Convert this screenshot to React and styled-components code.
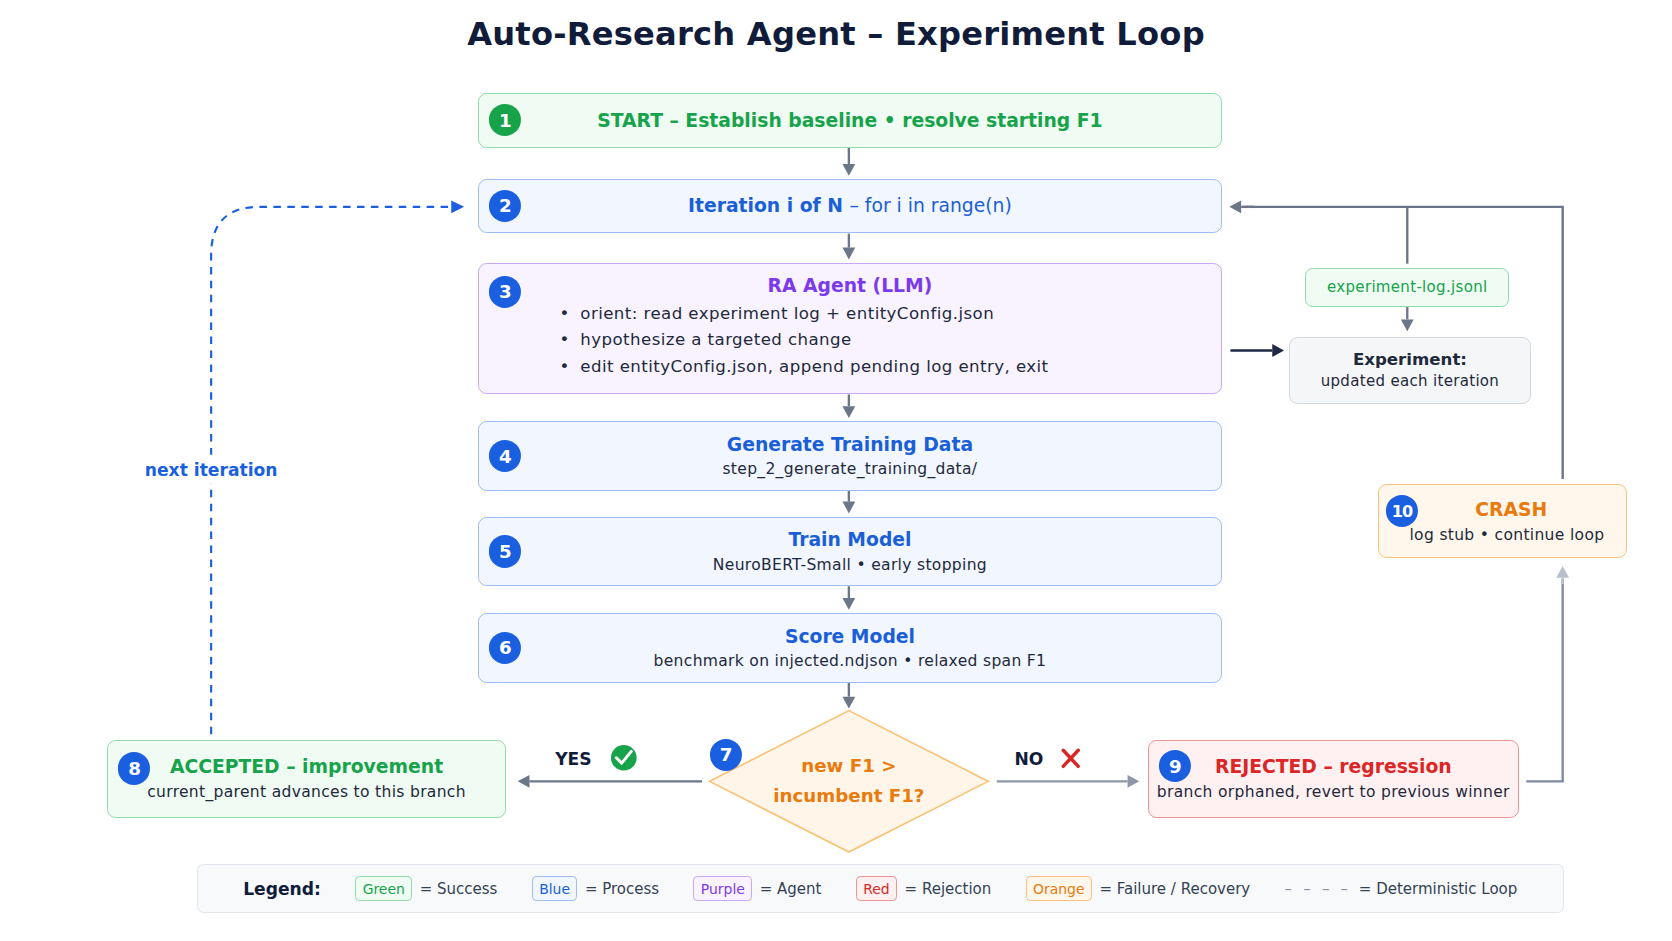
import styled, { createGlobalStyle } from 'styled-components';

const Global = createGlobalStyle`
  html, body { margin: 0; padding: 0; background: #ffffff; }
  body { font-family: "DejaVu Sans", "Liberation Sans", sans-serif; color: #1e293b; }
`;

const tones = {
  green: { bg: '#effbf3', border: '#8fdcaa', text: '#16a34a' },
  blue: { bg: '#f1f6ff', border: '#9dbef2', text: '#1a5fd8' },
  purple: { bg: '#f8f3ff', border: '#cba8f2', text: '#7c3aed' },
  red: { bg: '#fff1f1', border: '#f09393', text: '#dc2626' },
  orange: { bg: '#fff7ec', border: '#fcc07e', text: '#ea7a0c' },
  gray: { bg: '#f5f6f8', border: '#d3d7de', text: '#1e293b' },
};

const Stage = styled.div`
  width: 1560px;
  height: 878px;
  position: relative;
  zoom: 1.0718;
  overflow: hidden;
`;

const Title = styled.h1`
  margin: 0;
  padding-top: 14px;
  text-align: center;
  font-size: 30px;
  font-weight: bold;
  color: #111c3a;
  letter-spacing: 0.2px;
`;

const Node = styled.div`
  position: absolute;
  box-sizing: border-box;
  background: ${p => tones[p.tone].bg};
  border: 1.5px solid ${p => tones[p.tone].border};
  border-radius: 8px;
  display: flex;
  flex-direction: column;
  align-items: center;
  justify-content: center;
  gap: 5px;
  text-align: center;
`;

const NodeTitle = styled.div`
  font-size: 17.5px;
  font-weight: bold;
  color: ${p => tones[p.tone].text};
  span { font-weight: normal; }
`;

const Sub = styled.div`
  font-size: 14.5px;
  color: #1e293b;
  letter-spacing: 0.3px;
`;

const Bullets = styled.ul`
  margin: 0;
  padding: 0 0 0 75px;
  align-self: stretch;
  text-align: left;
  list-style: none;
  li { font-size: 15.5px; line-height: 25px; letter-spacing: 0.4px; }
  li::before { content: "•"; margin-right: 10px; }
`;

const Badge = styled.div`
  position: absolute;
  width: 30px;
  height: 30px;
  border-radius: 50%;
  background: ${p => (p.green ? '#16a34a' : '#1a5fe0')};
  color: #fff;
  font-weight: bold;
  font-size: ${p => (p.small ? '15px' : '17px')};
  display: flex;
  align-items: center;
  justify-content: center;
  transform: translate(-50%, -50%);
  letter-spacing: -1px;
`;

const Label = styled.div`
  position: absolute;
  transform: translate(-50%, -50%);
  font-size: ${p => p.size || 16}px;
  font-weight: bold;
  color: ${p => p.color || '#111c3a'};
  white-space: nowrap;
  background: ${p => p.bg || 'transparent'};
  padding: 4px 0;
`;

const DiamondText = styled.div`
  position: absolute;
  left: 662px;
  top: 663px;
  width: 260px;
  height: 132px;
  display: flex;
  flex-direction: column;
  align-items: center;
  justify-content: center;
  font-size: 17px;
  font-weight: bold;
  color: #ea7a0c;
  line-height: 28px;
`;

const Legend = styled.div`
  position: absolute;
  left: 184px;
  top: 806px;
  width: 1275px;
  height: 46px;
  box-sizing: border-box;
  background: #f8f9fb;
  border: 1.5px solid #e2e5eb;
  border-radius: 6px;
  display: flex;
  align-items: center;
  padding-left: 42px;
  gap: 32px;
  font-size: 14px;
  color: #334155;
`;

const LegendHead = styled.b`
  font-size: 16px;
  color: #111c3a;
  margin-right: 0;
`;

const LegendItem = styled.div`
  display: flex;
  align-items: center;
  gap: 7px;
`;

const Chip = styled.span`
  font-size: 13px;
  color: ${p => tones[p.tone].text};
  background: ${p => tones[p.tone].bg};
  border: 1.5px solid ${p => tones[p.tone].border};
  border-radius: 4px;
  padding: 3px 6px;
`;

const Overlay = styled.svg`
  position: absolute;
  left: 0;
  top: 0;
`;

const main = [
  { n: 2, top: 167, h: 50, title: <>Iteration i of N <span>– for i in range(n)</span></> },
  { n: 4, top: 393, h: 65, title: 'Generate Training Data', sub: 'step_2_generate_training_data/' },
  { n: 5, top: 482, h: 65, title: 'Train Model', sub: 'NeuroBERT-Small • early stopping' },
  { n: 6, top: 572, h: 65, title: 'Score Model', sub: 'benchmark on injected.ndjson • relaxed span F1' },
];

const G = '#6b7689';

function Arrow({ x1, y1, x2, y2, color = G, w = 2.2 }) {
  const a = Math.atan2(y2 - y1, x2 - x1);
  const L = 11, W = 6;
  const bx = x2 - L * Math.cos(a), by = y2 - L * Math.sin(a);
  const px = -Math.sin(a) * W, py = Math.cos(a) * W;
  return (
    <g>
      <line x1={x1} y1={y1} x2={bx} y2={by} stroke={color} strokeWidth={w} />
      <polygon points={`${x2},${y2} ${bx + px},${by + py} ${bx - px},${by - py}`} fill={color} />
    </g>
  );
}

export default function App() {
  return (
    <>
      <Global />
      <Stage>
        <Title>Auto-Research Agent – Experiment Loop</Title>

        <Overlay width="1560" height="878">
          <Arrow x1={792} y1={138} x2={792} y2={164} />
          <Arrow x1={792} y1={218} x2={792} y2={242} />
          <Arrow x1={792} y1={368} x2={792} y2={390} />
          <Arrow x1={792} y1={458} x2={792} y2={479} />
          <Arrow x1={792} y1={547} x2={792} y2={569} />
          <Arrow x1={792} y1={637} x2={792} y2={661} />
          <Arrow x1={655} y1={729} x2={483} y2={729} />
          <Arrow x1={930} y1={729} x2={1063} y2={729} color="#8d97a8" />
          <polyline points="1424,729 1458,729 1458,540" fill="none" stroke="#7f8aa0" strokeWidth="2.2" />
          <Arrow x1={1458} y1={545} x2={1458} y2={528} color="#b8c0cc" />
          <polyline points="1458,447 1458,193 1160,193" fill="none" stroke={G} strokeWidth="2.2" />
          <Arrow x1={1170} y1={193} x2={1147} y2={193} />
          <line x1={1313} y1={193} x2={1313} y2={246} stroke={G} strokeWidth="2.2" />
          <Arrow x1={1313} y1={286} x2={1313} y2={309} />
          <Arrow x1={1148} y1={327} x2={1198} y2={327} color="#1e2a45" />
          <path d="M197 685 L197 238 Q197 193 242 193 L422 193" fill="none" stroke="#1a5fe0" strokeWidth="2" strokeDasharray="7 6" />
          <polygon points="433,193 421,187 421,199" fill="#1a5fe0" />
          <polygon points="792,663 922,729 792,795 662,729" fill="#fff6e9" stroke="#fcc072" strokeWidth="1.5" />
          <circle cx="582" cy="707" r="12" fill="#16a34a" />
          <path d="M575 707 l5 5 l9 -11" fill="none" stroke="#fff" strokeWidth="2.8" strokeLinecap="round" strokeLinejoin="round" />
          <path d="M992 700 l14 15 M1006 700 l-14 15" stroke="#dc2626" strokeWidth="3.2" strokeLinecap="round" />
        </Overlay>

        <Node tone="green" style={{ left: 446, top: 87, width: 694, height: 51 }}>
          <NodeTitle tone="green">START – Establish baseline • resolve starting F1</NodeTitle>
        </Node>
        <Badge green style={{ left: 471, top: 112 }}>1</Badge>

        {main.map(m => (
          <div key={m.n}>
            <Node tone="blue" style={{ left: 446, top: m.top, width: 694, height: m.h }}>
              <NodeTitle tone="blue">{m.title}</NodeTitle>
              {m.sub && <Sub>{m.sub}</Sub>}
            </Node>
            <Badge style={{ left: 471, top: m.top + m.h / 2 }}>{m.n}</Badge>
          </div>
        ))}

        <Node tone="purple" style={{ left: 446, top: 245, width: 694, height: 123, justifyContent: 'flex-start', paddingTop: 11, gap: 4 }}>
          <NodeTitle tone="purple">RA Agent (LLM)</NodeTitle>
          <Bullets>
            <li>orient: read experiment log + entityConfig.json</li>
            <li>hypothesize a targeted change</li>
            <li>edit entityConfig.json, append pending log entry, exit</li>
          </Bullets>
        </Node>
        <Badge style={{ left: 471, top: 272 }}>3</Badge>

        <Node tone="green" style={{ left: 1218, top: 250, width: 190, height: 36, borderRadius: 7 }}>
          <Sub style={{ color: '#16a34a', fontSize: 14 }}>experiment-log.jsonl</Sub>
        </Node>
        <Node tone="gray" style={{ left: 1203, top: 314, width: 225, height: 63, gap: 3 }}>
          <NodeTitle tone="gray" style={{ fontSize: 15.5 }}>Experiment:</NodeTitle>
          <Sub style={{ fontSize: 14 }}>updated each iteration</Sub>
        </Node>

        <Node tone="orange" style={{ left: 1286, top: 452, width: 232, height: 69, paddingLeft: 8 }}>
          <NodeTitle tone="orange" style={{ marginLeft: 8 }}>CRASH</NodeTitle>
          <Sub>log stub • continue loop</Sub>
        </Node>
        <Badge small style={{ left: 1308, top: 477 }}>10</Badge>

        <Node tone="green" style={{ left: 100, top: 690, width: 372, height: 73 }}>
          <NodeTitle tone="green">ACCEPTED – improvement</NodeTitle>
          <Sub>current_parent advances to this branch</Sub>
        </Node>
        <Badge style={{ left: 125, top: 717 }}>8</Badge>

        <Node tone="red" style={{ left: 1071, top: 690, width: 346, height: 73 }}>
          <NodeTitle tone="red">REJECTED – regression</NodeTitle>
          <Sub>branch orphaned, revert to previous winner</Sub>
        </Node>
        <Badge style={{ left: 1096, top: 715 }}>9</Badge>

        <DiamondText>
          <div>new F1 &gt;</div>
          <div>incumbent F1?</div>
        </DiamondText>
        <Badge style={{ left: 677, top: 704 }}>7</Badge>

        <Label style={{ left: 535, top: 708 }}>YES</Label>
        <Label style={{ left: 960, top: 708 }}>NO</Label>
        <Label color="#1a5fe0" bg="#ffffff" style={{ left: 197, top: 438 }}>next iteration</Label>

        <Legend>
          <LegendHead>Legend:</LegendHead>
          <LegendItem><Chip tone="green">Green</Chip>= Success</LegendItem>
          <LegendItem><Chip tone="blue">Blue</Chip>= Process</LegendItem>
          <LegendItem><Chip tone="purple">Purple</Chip>= Agent</LegendItem>
          <LegendItem><Chip tone="red">Red</Chip>= Rejection</LegendItem>
          <LegendItem><Chip tone="orange">Orange</Chip>= Failure / Recovery</LegendItem>
          <LegendItem><span style={{ color: '#8a93a3', letterSpacing: 3 }}>– – – –</span>= Deterministic Loop</LegendItem>
        </Legend>
      </Stage>
    </>
  );
}
